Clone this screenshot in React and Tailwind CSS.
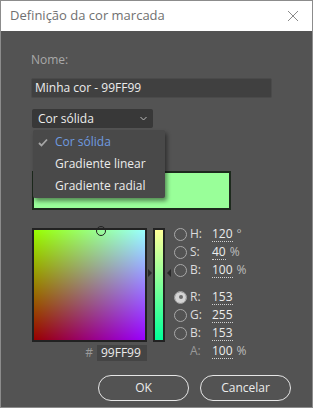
import React from 'react';

const font = { fontFamily: '"Open Sans", "Noto Sans", sans-serif' };

const Radio = ({ checked }) => (
  <span className="flex h-[13px] w-[13px] items-center justify-center rounded-full border border-[#a8a8a8]">
    {checked && <span className="h-[11px] w-[11px] rounded-full bg-[#d4d4d4] flex items-center justify-center"><span className="h-[4px] w-[4px] rounded-full bg-[#6a6a6a]" /></span>}
  </span>
);

const Row = ({ label, value, unit, checked, radio = true, dim }) => (
  <div className="flex h-[18px] items-center">
    <div className="w-[16px]">{radio && <Radio checked={checked} />}</div>
    <span className={`w-[22px] ${dim ? 'text-[#9a9a9a]' : 'text-[#dcdcdc]'}`}>{label}</span>
    <span className="border-b border-dotted border-[#cfcfcf] leading-[14px] text-[#ececec]">{value}</span>
    {unit && <span className="ml-[4px] text-[#bdbdbd]">{unit}</span>}
  </div>
);

export default function App() {
  return (
    <div style={font} className="flex h-[408px] w-[313px] flex-col border border-[#8c8c8c] bg-[#535353] text-[12px]">
      <div className="flex h-[30px] shrink-0 items-center justify-between bg-white pl-[9px] pr-[10px]">
        <span className="text-[13px] text-[#707070]">Definição da cor marcada</span>
        <svg width="12" height="12" viewBox="0 0 12 12" className="mr-[3px]">
          <path d="M1 1 L11 11 M11 1 L1 11" stroke="#8a8a8a" strokeWidth="1" />
        </svg>
      </div>

      <div className="relative flex flex-col px-[30px] pt-[20px]">
        <div className="text-[#a9a9a9]">Nome:</div>
        <div className="mt-[9px] flex h-[20px] w-[241px] items-center rounded-[2px] border border-[#4a4a4a] bg-[#404040] px-[3px] text-[#ececec]">
          Minha cor - 99FF99
        </div>
        <div className="mt-[11px] ml-[1px] flex h-[19px] w-[121px] items-center justify-between rounded-[2px] bg-[#383838] pl-[6px] pr-[6px] text-[#ececec]">
          <span>Cor sólida</span>
          <svg width="7" height="5" viewBox="0 0 7 5"><path d="M0.5 1 L3.5 4 L6.5 1" stroke="#bbbbbb" fill="none" strokeWidth="1" /></svg>
        </div>

        <div className="ml-[1px] mt-[43px] h-[39px] w-[199px] border-2 border-[#1d2a1d] bg-[#99ff99]" />

        <div className="absolute left-[32px] top-[99px] z-10 flex w-[132px] flex-col rounded-[2px] bg-[#494949] py-[1px] shadow-[2px_3px_4px_rgba(0,0,0,0.45)]">
          <div className="flex h-[22px] items-center text-[#6f9be0]">
            <svg width="10" height="9" viewBox="0 0 10 9" className="ml-[5px] mr-[7px]"><path d="M1 5 L3.5 7.5 L9 1.5" stroke="#a6a6a6" strokeWidth="1.8" fill="none" /></svg>
            Cor sólida
          </div>
          <div className="flex h-[22px] items-center pl-[22px] text-[#ececec]">Gradiente linear</div>
          <div className="flex h-[22px] items-center pl-[22px] text-[#ececec]">Gradiente radial</div>
        </div>

        <div className="mt-[18px] flex">
          <div className="flex flex-col items-end">
            <div className="relative ml-[1px] h-[114px] w-[115px] border-2 border-[#222] bg-[linear-gradient(to_bottom,#00ff00,#000000),linear-gradient(to_right,#990000,#9900ff)] bg-blend-lighten">
              <span className="absolute left-[62px] top-[-4px] h-[10px] w-[10px] rounded-full border border-[#222]" />
            </div>
            <div className="mt-[2px] flex items-center">
              <span className="mr-[4px] text-[#9a9a9a]">#</span>
              <div className="flex h-[16px] w-[50px] items-center bg-[#444] pl-[4px] text-[#ececec]">99FF99</div>
            </div>
          </div>

          <div className="relative ml-[6px] h-[114px] w-[12px]">
            <div className="h-full w-full border-2 border-[#222] bg-[linear-gradient(to_bottom,#ffff99,#00ff99)]" />
            <span className="absolute left-[-5px] top-[41px] h-0 w-0 border-y-[4px] border-l-[4px] border-y-transparent border-l-[#2a2a2a]" />
            <span className="absolute right-[-6px] top-[41px] h-0 w-0 border-y-[4px] border-r-[4px] border-y-transparent border-r-[#2a2a2a]" />
          </div>

          <div className="ml-[9px] mt-[-3px] flex flex-col">
            <Row label="H:" value="120" unit="°" />
            <Row label="S:" value="40" unit="%" />
            <Row label="B:" value="100" unit="%" />
            <div className="h-[9px]" />
            <Row label="R:" value="153" checked />
            <Row label="G:" value="255" />
            <Row label="B:" value="153" />
            <Row label="A:" value="100" unit="%" radio={false} dim />
          </div>
        </div>

        <div className="mr-[-9px] mt-[13px] flex justify-end gap-[11px]">
          <button className="h-[26px] w-[91px] rounded-full border-[1.5px] border-[#e6e6e6] text-[#ececec]">OK</button>
          <button className="h-[26px] w-[91px] rounded-full border-[1.5px] border-[#e6e6e6] text-[#ececec]">Cancelar</button>
        </div>
      </div>
    </div>
  );
}
